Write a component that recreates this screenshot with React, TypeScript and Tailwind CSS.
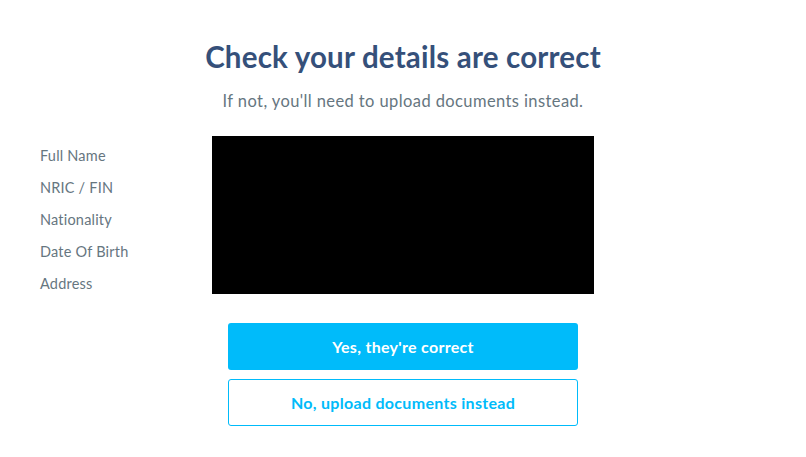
export default function App() {
  const labels = ["Full Name", "NRIC / FIN", "Nationality", "Date Of Birth", "Address"];

  return (
    <div className="min-h-screen bg-white font-['Lato','Open_Sans',sans-serif]">
      <div className="pt-[38px] text-center">
        <h1 className="text-[29.5px] leading-[38px] font-bold tracking-[0.2px] text-[#35507a]">
          Check your details are correct
        </h1>
        <p className="mt-[13px] text-[16.5px] leading-[24px] tracking-[0.4px] text-[#66767f]">
          If not, you'll need to upload documents instead.
        </p>
      </div>

      <div className="mt-[23px] flex h-[158px] pl-[40px]">
        <div className="flex w-[172px] flex-col pt-[10px]">
          {labels.map((label) => (
            <div
              key={label}
              className="h-[32px] shrink-0 text-[14.5px] leading-[20px] tracking-[0.2px] text-[#66767f]"
            >
              {label}
            </div>
          ))}
        </div>
        <div className="h-[158px] w-[382px] bg-black" />
      </div>

      <div className="mx-auto mt-[29px] flex w-[350px] flex-col gap-[9px]">
        <button className="h-[47px] rounded-[3px] bg-[#00bbfa] text-[16px] font-bold tracking-[0.3px] text-white">
          Yes, they're correct
        </button>
        <button className="h-[47px] rounded-[3px] border border-[#00bbfa] bg-white text-[16px] font-bold tracking-[0.3px] text-[#00bbfa]">
          No, upload documents instead
        </button>
      </div>
    </div>
  );
}
